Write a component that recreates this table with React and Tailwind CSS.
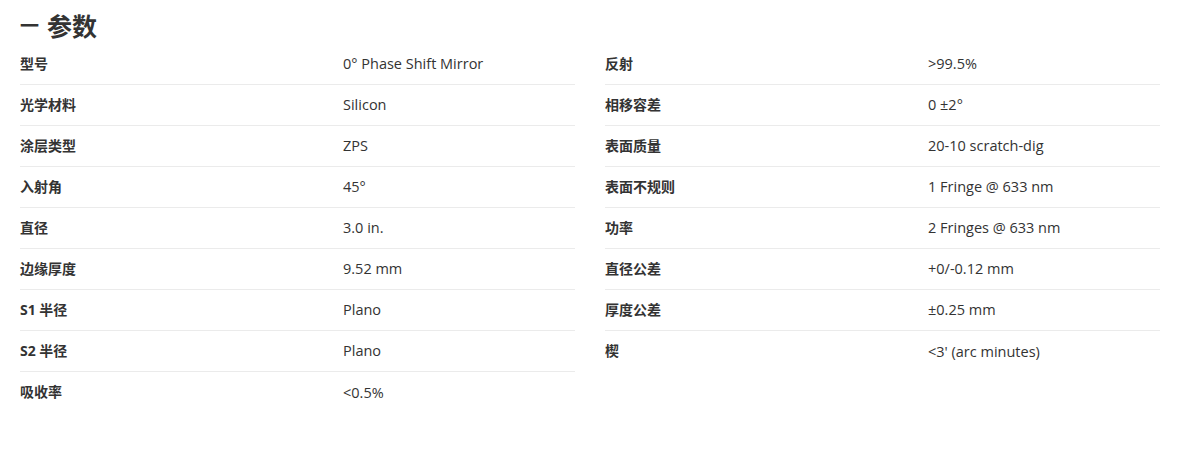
import React from 'react';

const left = [
  ['型号', '0° Phase Shift Mirror'],
  ['光学材料', 'Silicon'],
  ['涂层类型', 'ZPS'],
  ['入射角', '45°'],
  ['直径', '3.0 in.'],
  ['边缘厚度', '9.52 mm'],
  ['S1 半径', 'Plano'],
  ['S2 半径', 'Plano'],
  ['吸收率', '<0.5%'],
];

const right = [
  ['反射', '>99.5%'],
  ['相移容差', '0 ±2°'],
  ['表面质量', '20-10 scratch-dig'],
  ['表面不规则', '1 Fringe @ 633 nm'],
  ['功率', '2 Fringes @ 633 nm'],
  ['直径公差', '+0/-0.12 mm'],
  ['厚度公差', '±0.25 mm'],
  ['楔', "<3' (arc minutes)"],
];

function SpecColumn({ rows }) {
  return (
    <div className="flex flex-col divide-y divide-[#ebebeb]">
      {rows.map(([label, value]) => (
        <div key={label} className="flex items-center h-[41px]">
          <div className="w-[323px] shrink-0 font-bold text-[14px] pb-[2px]">{label}</div>
          <div className="text-[14.5px]">{value}</div>
        </div>
      ))}
    </div>
  );
}

export default function App() {
  return (
    <div
      className="min-h-screen bg-white text-[#333333] px-[20px]"
      style={{ fontFamily: '"Open Sans", "Noto Sans CJK SC", sans-serif' }}
    >
      <h2 className="pt-[8px] h-[44px] leading-[32px] text-[25px] font-bold flex items-center">
        <span className="text-[19px] font-bold mr-[8px]">一</span>
        <span>参数</span>
      </h2>
      <div className="grid grid-cols-2 gap-x-[30px] w-[1140px]">
        <SpecColumn rows={left} />
        <SpecColumn rows={right} />
      </div>
    </div>
  );
}
